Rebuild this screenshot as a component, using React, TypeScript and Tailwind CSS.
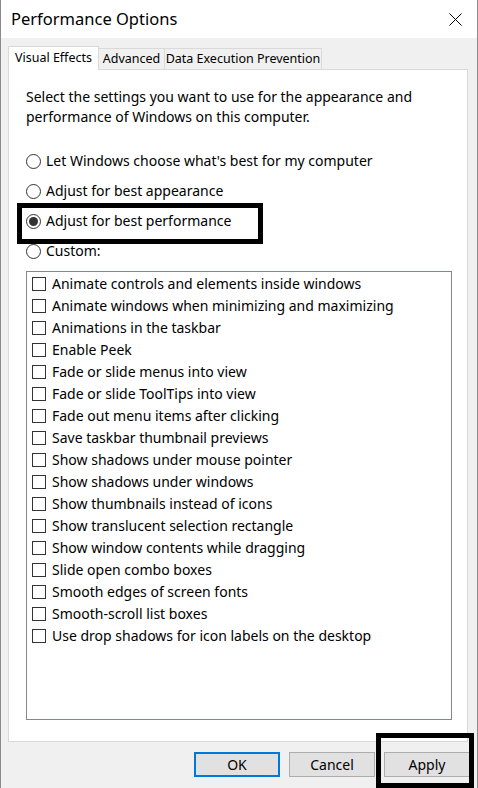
import React from 'react';

const effects = [
  'Animate controls and elements inside windows',
  'Animate windows when minimizing and maximizing',
  'Animations in the taskbar',
  'Enable Peek',
  'Fade or slide menus into view',
  'Fade or slide ToolTips into view',
  'Fade out menu items after clicking',
  'Save taskbar thumbnail previews',
  'Show shadows under mouse pointer',
  'Show shadows under windows',
  'Show thumbnails instead of icons',
  'Show translucent selection rectangle',
  'Show window contents while dragging',
  'Slide open combo boxes',
  'Smooth edges of screen fonts',
  'Smooth-scroll list boxes',
  'Use drop shadows for icon labels on the desktop',
];

const radios = [
  "Let Windows choose what's best for my computer",
  'Adjust for best appearance',
  'Adjust for best performance',
  'Custom:',
];

const Radio: React.FC<{ checked?: boolean }> = ({ checked }) => (
  <span className="w-[15px] h-[15px] rounded-full border border-[#333] bg-white flex items-center justify-center shrink-0">
    {checked && <span className="w-[9px] h-[9px] rounded-full bg-[#333]" />}
  </span>
);

export default function App() {
  return (
    <div className="relative w-[478px] h-[788px] bg-[#f0f0f0] border-x border-[#8a8a8a] flex flex-col font-['Noto_Sans',sans-serif] text-black text-[14px] leading-[20px]">
      {/* Title bar */}
      <div className="h-[38px] bg-white flex items-center justify-between pl-[10px] pr-[15px]">
        <span className="text-[16.5px]">Performance Options</span>
        <svg width="13" height="13" viewBox="0 0 13 13" fill="none" stroke="#000" strokeWidth="1">
          <path d="M0.5 0.5 L12.5 12.5 M12.5 0.5 L0.5 12.5" />
        </svg>
      </div>

      <div className="pl-[7px] pt-[8px]">
        {/* Tabs */}
        <div className="flex items-end relative z-10 -mb-px text-[12.5px] whitespace-nowrap">
          <div className="w-[91px] h-[24px] bg-white border border-b-0 border-[#d9d9d9] flex items-center justify-center pb-[2px]">
            Visual Effects
          </div>
          <div className="w-[66px] h-[22px] border border-l-0 border-[#d9d9d9] flex items-center justify-center">
            Advanced
          </div>
          <div className="w-[157px] h-[22px] border border-l-0 border-[#d9d9d9] flex items-center justify-center">
            Data Execution Prevention
          </div>
        </div>

        {/* Panel */}
        <div className="w-[460px] h-[673px] bg-white border border-[#d9d9d9] pl-[17px] pt-[17px]">
          <p>
            Select the settings you want to use for the appearance and
            <br />
            performance of Windows on this computer.
          </p>
          <div className="mt-[19px] flex flex-col">
            {radios.map((r, i) => (
              <div key={r} className="h-[30px] flex items-center gap-[5px]">
                <Radio checked={i === 2} />
                <span>{r}</span>
              </div>
            ))}
          </div>
          <div className="mt-[5px] w-[426px] h-[449px] border border-[#828790] bg-white pl-[5px] pt-px">
            {effects.map((e) => (
              <div key={e} className="h-[22px] flex items-center gap-[6px]">
                <span className="w-[14px] h-[14px] border border-[#333] bg-white shrink-0" />
                <span>{e}</span>
              </div>
            ))}
          </div>
        </div>
      </div>

      {/* Buttons */}
      <div className="flex justify-end gap-[9px] pr-[7px] mt-[10px]">
        <button className="w-[86px] h-[25px] bg-[#e1e1e1] border-2 border-[#0078d7]">OK</button>
        <button className="w-[86px] h-[25px] bg-[#e1e1e1] border border-[#adadad]">Cancel</button>
        <button className="w-[86px] h-[25px] bg-[#e1e1e1] border border-[#adadad]">Apply</button>
      </div>

      {/* Annotation boxes */}
      <div className="absolute left-[16px] top-[203px] w-[246px] h-[41px] border-[5px] border-black pointer-events-none" />
      <div className="absolute left-[375px] top-[733px] w-[98px] h-[55px] border-[5px] border-black pointer-events-none" />
    </div>
  );
}
